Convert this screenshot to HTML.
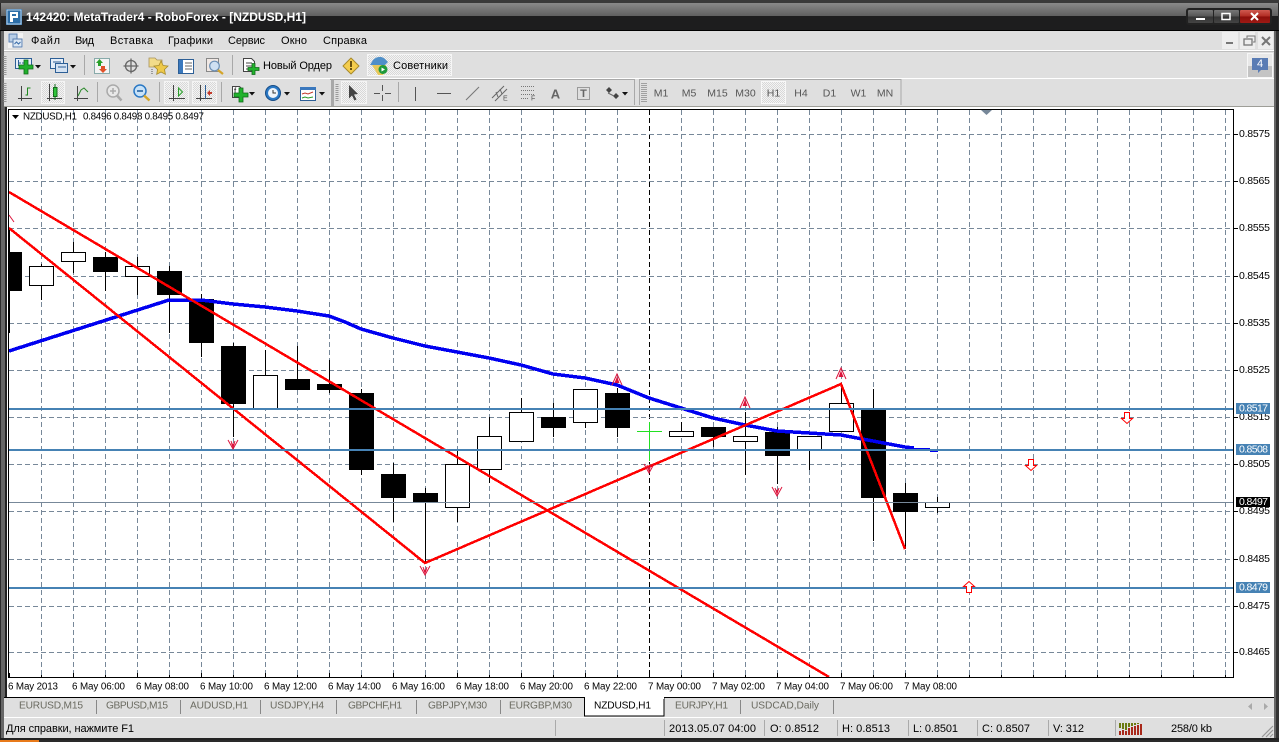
<!DOCTYPE html>
<html><head><meta charset="utf-8"><style>
html,body{margin:0;padding:0;background:#000;overflow:hidden}
svg{display:block}
text{font-family:"Liberation Sans","Noto Sans CJK SC",sans-serif;font-size:11px;dominant-baseline:central}
.g{fill:#555;font-size:10.5px}
.t{fill:#6a6a60;font-size:10.2px}
.p{font-size:10.5px;fill:#000}
.w{fill:#fff;font-size:10.5px}
.x{font-size:9.8px;fill:#000}
.c path,.c rect{shape-rendering:crispEdges}
</style></head><body>
<svg width="1279" height="742" viewBox="0 0 1279 742" xmlns="http://www.w3.org/2000/svg">
<defs>
<linearGradient id="tg" x1="0" y1="0" x2="0" y2="1"><stop offset="0" stop-color="#8a8a8a"/><stop offset="1" stop-color="#5f5f5f"/></linearGradient>
<linearGradient id="bg" x1="0" y1="0" x2="0" y2="1"><stop offset="0" stop-color="#777"/><stop offset=".5" stop-color="#555"/><stop offset=".5" stop-color="#333"/><stop offset="1" stop-color="#444"/></linearGradient>
<linearGradient id="rg" x1="0" y1="0" x2="0" y2="1"><stop offset="0" stop-color="#d05a50"/><stop offset=".5" stop-color="#b02a22"/><stop offset=".5" stop-color="#8c0e0a"/><stop offset="1" stop-color="#a01a14"/></linearGradient>
<pattern id="chk" width="2" height="2" patternUnits="userSpaceOnUse"><rect width="2" height="2" fill="#f4f4f4"/><rect width="1" height="1" fill="#d8d8d8"/><rect x="1" y="1" width="1" height="1" fill="#d8d8d8"/></pattern>
</defs>
<!-- window frame -->
<rect width="1279" height="742" fill="#2a2a2a"/>
<rect x="0" y="0" width="1279" height="3" fill="#3a3a3a"/>
<rect x="1" y="3" width="1277" height="13" fill="url(#tg)"/>
<rect x="1" y="16" width="1277" height="14" fill="#1d1d1e"/>
<rect x="0" y="30" width="1279" height="1" fill="#000"/>
<rect x="1" y="31" width="4" height="707" fill="#666"/>
<rect x="5" y="31" width="2" height="707" fill="#222"/>
<rect x="1274" y="31" width="2" height="707" fill="#666"/>
<rect x="1276" y="31" width="3" height="707" fill="#333"/>
<rect x="0" y="740" width="39" height="2" fill="#e87a1a"/>
<!-- title -->
<g>
<rect x="6" y="9" width="16" height="16" fill="#2d6ea8"/><rect x="7" y="10" width="14" height="14" fill="none" stroke="#bcd4ea"/>
<path d="M10 12h8v6h-5v4h-3zM12 14v2h4v-2z" fill="#fff" fill-rule="evenodd"/>
<text x="26" y="17" style="font-size:12px;font-weight:bold;fill:#fff" textLength="280">142420: MetaTrader4 - RoboForex - [NZDUSD,H1]</text>
</g>
<rect x="1186" y="8" width="86" height="17" rx="3" fill="#222"/>
<rect x="1188" y="10" width="25" height="13" rx="1" fill="url(#bg)"/>
<rect x="1214" y="10" width="25" height="13" rx="1" fill="url(#bg)"/>
<rect x="1240" y="10" width="30" height="13" rx="1" fill="url(#rg)"/>
<rect x="1196" y="18" width="9" height="2" fill="#fff"/>
<rect x="1222" y="13.500" width="8" height="6" fill="none" stroke="#fff" stroke-width="1.500"/>
<path d="M1251 13l7 7M1258 13l-7 7" stroke="#fff" stroke-width="2"/>
<!-- menu and toolbars -->
<rect x="7" y="31" width="1267" height="76" fill="#dfdfdf"/>
<rect x="4" y="31" width="3" height="76" fill="#dfdfdf"/>
<rect x="4" y="50" width="1270" height="1" fill="#fff"/>
<rect x="4" y="51" width="1270" height="1" fill="#bdbdbd"/>
<rect x="4" y="78" width="1270" height="1" fill="#fff"/>
<rect x="4" y="106" width="1270" height="1" fill="#9e9e98"/>
<!-- menu -->
<rect x="8" y="33" width="15" height="15" fill="#f2f2f2"/>
<rect x="9" y="34" width="8" height="8" fill="#b7cde6" stroke="#5a7fb0"/><rect x="13" y="39" width="9" height="8" fill="#dbe7f4" stroke="#5a7fb0"/>
<path d="M14.500 44l2-2 2 2 2-2" fill="none" stroke="#3a6ca8"/>
<text x="31" y="41" textLength="29">Файл</text>
<text x="75" y="41" textLength="19">Вид</text>
<text x="110" y="41" textLength="43">Вставка</text>
<text x="168" y="41" textLength="45">Графики</text>
<text x="228" y="41" textLength="37">Сервис</text>
<text x="281" y="41" textLength="26">Окно</text>
<text x="323" y="41" textLength="44">Справка</text>
<!-- mdi buttons -->
<rect x="1222" y="32" width="16" height="17" fill="#eeeeee"/><rect x="1240" y="32" width="15" height="17" fill="#eeeeee"/><rect x="1258" y="32" width="15" height="17" fill="#eeeeee"/>
<rect x="1226" y="42" width="7" height="2" fill="#777"/>
<rect x="1244" y="39" width="8" height="6" fill="none" stroke="#777" stroke-width="1.300"/><path d="M1247 38v-2h8v6h-2" fill="none" stroke="#777"/>
<path d="M1262 37l8 8M1270 37l-8 8" stroke="#777" stroke-width="2"/>
<!-- message -->
<rect x="1247.500" y="53.500" width="25" height="24" fill="#e8e8e8" stroke="#f6f6f6"/><rect x="1248" y="66" width="24" height="11" fill="#c4c4c4"/>
<path d="M1252 58h16v12h-7l-3 3v-3h-6z" fill="#5a7cb4"/>
<text x="1260" y="64" text-anchor="middle" style="font-size:11px;fill:#fff">4</text>
<!-- row 1 grips/seps -->
<path d="M5 56v20M5 83v20" stroke="#9a9a9a" stroke-width="3" stroke-dasharray="1 1"/>
<path d="M84.500 55v20M232.500 55v20M97.500 82v20M159.500 82v20M221.500 82v20M398.500 82v20" stroke="#a8a8a8"/>
<!-- new chart -->
<rect x="15.500" y="58.500" width="16" height="10" fill="#e6eef8" stroke="#2d5f96"/><path d="M18.500 60v6M22 63h6M18 63h3" stroke="#2d5f96"/>
<path d="M24 60h4v5h5v4h-5v5h-4v-5h-5v-4h5z" fill="#21b02c" stroke="#116a1a" stroke-width=".8"/>
<path d="M35 65h6l-3 3.500z" fill="#111"/>
<!-- profile -->
<rect x="50.500" y="58.500" width="13" height="10" fill="#e6eef8" stroke="#2d5f96"/><rect x="55.500" y="63.500" width="12" height="9" fill="#d4e2f2" stroke="#2d5f96"/><path d="M53 62h8M58 67h8" stroke="#2d5f96"/>
<path d="M70 65h6l-3 3.500z" fill="#111"/>
<!-- market watch -->
<rect x="94.500" y="58.500" width="15" height="15" fill="#f4f4f4" stroke="#8aa"/><path d="M96 63l3.500-4 3.500 4h-2v3h-3v-3z" fill="#2aa02a"/><path d="M103 73l-4-4h2v-3h4v3h2z" fill="#e0522a"/>
<!-- crosshair -->
<g fill="none" stroke="#666" stroke-width="1.300"><circle cx="131" cy="66" r="5.500"/><path d="M131 58.500v15M123.500 66h15"/></g>
<!-- star folder -->
<path d="M149 58h6l2 2h5v7h-13z" fill="#f2dc8a" stroke="#a8925a" stroke-width=".8"/><path d="M161 61l2.200 4.500 4.800.6-3.500 3.400.9 4.800-4.400-2.300-4.300 2.300.8-4.800-3.500-3.400 4.900-.6z" fill="#eec94a" stroke="#a58a2a" stroke-width=".8"/>
<path d="M152 69v5" stroke="#555" stroke-dasharray="1 1"/>
<!-- navigator -->
<rect x="178.500" y="59.500" width="15" height="14" fill="#fff" stroke="#2d5f96"/><rect x="179" y="60" width="4" height="13" fill="#3a78bd"/><path d="M185 63h7M185 66h7M185 69h7" stroke="#666"/>
<!-- terminal mag -->
<rect x="206.500" y="58.500" width="12" height="13" fill="#f0e8e4" stroke="#888"/><circle cx="214.500" cy="66" r="4.800" fill="#cfe0f2" stroke="#6b8fb5" stroke-width="1.200"/><path d="M218 70l5 4" stroke="#d4a52a" stroke-width="2.200"/>
<!-- new order -->
<path d="M243.500 58.500h8l3 3v10h-11z" fill="#fff" stroke="#444"/><path d="M246 63h6M246 66h6M246 69h4" stroke="#444"/>
<path d="M252 63.500h3v4h4v3h-4v4h-3v-4h-4v-3h4z" fill="#22b32d" stroke="#116a1a" stroke-width=".8"/>
<text x="263" y="66" textLength="69">Новый Ордер</text>
<!-- warning -->
<path d="M351 58l8 8-8 8-8-8z" fill="#f4cd4e" stroke="#a88a2a" stroke-linejoin="round"/><rect x="350" y="61" width="2" height="6" fill="#6a5210"/><rect x="350" y="68" width="2" height="2" fill="#6a5210"/>
<!-- advisors -->
<rect x="367" y="54" width="85" height="22" fill="url(#chk)"/><rect x="367.500" y="54.500" width="84" height="21" fill="none" stroke="#f6f6f6"/>
<path d="M370 65l3-5c4-4 9-4 12-1l3 3-3 3h-12z" fill="#4f8fc8"/><path d="M372 65h14v6l-3 4h-5z" fill="#e8c85a"/><circle cx="383" cy="69.500" r="4.500" fill="#1f9a3c"/><path d="M381.500 67.500l3.500 2-3.500 2z" fill="#fff"/>
<text x="393" y="66" textLength="55">Советники</text>
<!-- row 2 -->
<path d="M21.500 86v15M18 98.500h14" fill="none" stroke="#444"/><path d="M25.500 95h2v-7h3" fill="none" stroke="#1f8a1f"/>
<rect x="41" y="81" width="24" height="23" fill="url(#chk)"/><rect x="41.500" y="81.500" width="23" height="22" fill="none" stroke="#f4f4f4"/>
<path d="M49.500 84v17M47 98.500h15" fill="none" stroke="#444"/><path d="M55 84v16" stroke="#146c1c"/><rect x="53.500" y="87.500" width="3.500" height="9" fill="#2fc43a" stroke="#146c1c"/>
<path d="M77.500 86v15M74 98.500h14" fill="none" stroke="#444"/><path d="M78 96l3-6 3-2 4 4" fill="none" stroke="#2a8a2a"/>
<g fill="none" stroke="#aaa"><circle cx="113" cy="91" r="6" stroke-width="1.500" fill="#e8e8e8"/><path d="M110 91h6M113 88v6" stroke-width="1.500"/><path d="M117 95.500l4.500 5" stroke-width="2.500"/></g>
<circle cx="140" cy="91" r="6" fill="#c8e2f8" stroke="#2a78c4" stroke-width="1.500"/><path d="M137 91h6" stroke="#1a5a9a" stroke-width="1.500"/><path d="M144 95.500l5.500 5" stroke="#d4a52a" stroke-width="2.500"/>
<rect x="164" y="81" width="25" height="23" fill="url(#chk)"/><rect x="164.500" y="81.500" width="24" height="22" fill="none" stroke="#f4f4f4"/>
<path d="M173.500 85v16M169 98.500h16" fill="none" stroke="#444"/><path d="M178.500 88l4 4-4 4z" fill="#d8f0d8" stroke="#2a9a2a"/>
<rect x="192" y="81" width="25" height="23" fill="url(#chk)"/><rect x="192.500" y="81.500" width="24" height="22" fill="none" stroke="#f4f4f4"/>
<path d="M200.500 85v16M196 98.500h16" fill="none" stroke="#444"/><path d="M205.500 85v14" stroke="#2d5f96"/><path d="M207 93l3-3v2h2v2h-2v2z" fill="#c43a2a"/>
<path d="M232.500 86.500h7l2 2v9h-9z" fill="#fff" stroke="#444"/><text x="234" y="91" style="font-size:8px">f</text>
<path d="M239 88h4v5h5v4h-5v5h-4v-5h-5v-4h5z" fill="#22b32d" stroke="#116a1a" stroke-width=".8"/>
<path d="M249 92h6l-3 3.500z" fill="#111"/>
<circle cx="273" cy="93" r="7.500" fill="#2a78c4" stroke="#164c86"/><circle cx="273" cy="93" r="5" fill="#eef4fa"/><path d="M273 90v3h3" fill="none" stroke="#333"/>
<path d="M284 92h6l-3 3.500z" fill="#111"/>
<rect x="300.500" y="87.500" width="15" height="13" fill="#fff" stroke="#2d5f96"/><rect x="300" y="87" width="16" height="3" fill="#3a78bd"/><path d="M302 94l3-1 3 1 5-2" fill="none" stroke="#c43a2a"/><path d="M302 98l3-1 3 1 5-1" fill="none" stroke="#2a9a2a"/>
<path d="M319 92h6l-3 3.500z" fill="#111"/>
<rect x="331" y="79" width="3" height="27" fill="#a8a8a8"/>
<path d="M337 84v18" stroke="#9a9a9a" stroke-width="3" stroke-dasharray="1 1"/>
<rect x="341" y="81" width="26" height="23" fill="url(#chk)"/><rect x="341.500" y="81.500" width="25" height="22" fill="none" stroke="#f4f4f4"/>
<path d="M349 85l9 9-4 .5 2.500 5-2 1-2.500-5-3 3z" fill="#444"/>
<path d="M382.500 85v6M382.500 95v6M374 93.500h6M385 93.500h6" stroke="#555"/>
<path d="M415.500 87v14" stroke="#555"/><path d="M437 93.500h14" stroke="#555"/>
<path d="M466 100l13-13" stroke="#777" stroke-width="1.100"/>
<path d="M492 98l12-12M495 101l12-12M496 92l2 5M500 89l2 5" stroke="#666" stroke-width="1" fill="none"/><text x="503" y="99" style="font-size:7px;fill:#555">E</text>
<path d="M521 86.500h14M521 90.500h14M521 94.500h14M521 98.500h8" stroke="#777" stroke-dasharray="1 1"/><text x="531" y="99" style="font-size:7px;fill:#555">F</text>
<text x="555.500" y="94" text-anchor="middle" style="font-size:13px;fill:#666;font-weight:bold">A</text>
<rect x="577.500" y="87.500" width="12" height="12" fill="none" stroke="#555" stroke-dasharray="1 1"/><text x="583.500" y="94" text-anchor="middle" style="font-size:11px;fill:#666;font-weight:bold">T</text>
<path d="M606 90l3-3 3 3zM606 90l3 3 3-3zM613 96l3-3 3 3zM613 96l3 3 3-3z" fill="#444"/><path d="M608 93l6 3" stroke="#666"/>
<path d="M622 92h6l-3 3.500z" fill="#111"/>
<path d="M330 79.500h304.500V105M639.500 105V79.500h261.500V105" fill="none" stroke="#a8a8a8"/>
<path d="M644 83v19" stroke="#a0a0a0" stroke-width="6" stroke-dasharray="1 1"/>
<rect x="761" y="81" width="25" height="23" fill="url(#chk)"/><rect x="761.500" y="81.500" width="24" height="22" fill="none" stroke="#f8f8f8"/>
<text class="g" x="661" y="93.500" text-anchor="middle">M1</text><text class="g" x="689" y="93.500" text-anchor="middle">M5</text><text class="g" x="717.500" y="93.500" text-anchor="middle">M15</text><text class="g" x="745.500" y="93.500" text-anchor="middle">M30</text><text class="g" x="773.500" y="93.500" text-anchor="middle">H1</text><text class="g" x="801" y="93.500" text-anchor="middle">H4</text><text class="g" x="829.500" y="93.500" text-anchor="middle">D1</text><text class="g" x="858.500" y="93.500" text-anchor="middle">W1</text><text class="g" x="885" y="93.500" text-anchor="middle">MN</text>
<!-- chart -->
<rect x="7" y="107" width="1267" height="590" fill="#fff"/>
<g class="c">
<path d="M41.500 110V677M73.500 110V677M105.500 110V677M137.500 110V677M169.500 110V677M201.500 110V677M233.500 110V677M265.500 110V677M297.500 110V677M329.500 110V677M361.500 110V677M393.500 110V677M425.500 110V677M457.500 110V677M489.500 110V677M521.500 110V677M553.500 110V677M585.500 110V677M617.500 110V677M681.500 110V677M713.500 110V677M745.500 110V677M777.500 110V677M809.500 110V677M841.500 110V677M873.500 110V677M905.500 110V677M937.500 110V677M969.500 110V677M1001.500 110V677M1033.500 110V677M1065.500 110V677M1097.500 110V677M1129.500 110V677M1161.500 110V677M1193.500 110V677M1225.500 110V677" stroke="#778899" stroke-dasharray="5 3" fill="none"/>
<path d="M649.500 110V677" stroke="#000" stroke-dasharray="5 3"/>
<path d="M9 134.500H1233M9 181.500H1233M9 228.500H1233M9 276.500H1233M9 323.500H1233M9 370.500H1233M9 417.500H1233M9 464.500H1233M9 511.500H1233M9 559.500H1233M9 606.500H1233M9 652.500H1233" stroke="#778899" stroke-dasharray="5 3" fill="none"/>
<!-- wicks -->
<path stroke="#000" fill="none" d="M9.500 230V333M41.500 264V300M73.500 242V273M105.500 252V291M137.500 257V295M169.500 266V333M201.500 294V357M233.500 343V437M265.500 350V409M297.500 346V390M329.500 360V393M361.500 389V475M393.500 463V522M425.500 488V563M457.500 450V522M489.500 417V483M521.500 398V441M553.500 403V437M585.500 389V428M617.500 388V437M681.500 422V436M713.500 427V447M745.500 412V475M777.500 427V484M809.500 436V470M841.500 385V431M873.500 389V541M905.500 483V549M937.500 497V513"/>
<!-- black bodies -->
<path fill="#000" d="M9 252h13v39H9zM93 257h25v15H93zM157 271h25v24h-25zM189 299h25v44h-25zM221 346h25v58h-25zM285 379h25v11h-25zM317 384h25v6h-25zM349 393h25v77h-25zM381 474h25v24h-25zM413 493h25v10h-25zM541 417h25v11h-25zM605 393h25v35h-25zM701 427h25v10h-25zM765 432h25v24h-25zM861 409h25v89h-25zM893 493h25v19h-25z"/>
<!-- white bodies -->
<path fill="#fff" stroke="#000" d="M29.500 266.500h24v19h-24zM61.500 252.500h24v9h-24zM125.500 266.500h24v10h-24zM253.500 375.500h24v34h-24zM445.500 464.500h24v43h-24zM477.500 436.500h24v33h-24zM509.500 412.500h24v29h-24zM573.500 389.500h24v33h-24zM669.500 431.500h24v5h-24zM733.500 436.500h24v5h-24zM797.500 436.500h24v13h-24zM829.500 403.500h24v28h-24zM925.500 502.500h24v5h-24z"/>
<path d="M637 431.500h25M649.500 422v39" stroke="#22e022" fill="none"/>
<!-- MA -->
<path d="M9 351L169 300H201L233 304L265 307L297 311L329 316L345 322L361 329L393 338L425 346L457 352L489 358L521 365L553 374L585 378L617 385L649 398L681 408L713 418L745 425L777 431L809 433L841 435L873 441L905 447L914 448" fill="none" stroke="#0000f0" stroke-width="3.500"/>
<path d="M914 448.500H930" fill="none" stroke="#0000f0" stroke-width="1"/>
<!-- red -->
<path d="M9 192L829 677M9 228L425 563L841 384L905 549" fill="none" stroke="#f00" stroke-width="2.500"/>
<!-- levels -->
<path d="M9 409H1233M9 450H1233M9 588H1233" stroke="#4682b4" stroke-width="2" fill="none"/>
<path d="M930 451.500H938" stroke="#0000f0"/>
<path d="M9 502.500H1233" stroke="#778899"/>
<rect x="8" y="109" width="1226" height="1" fill="#000"/>
<rect x="8" y="109" width="1" height="569" fill="#000"/>
<rect x="1233" y="109" width="1" height="569" fill="#000"/>
<rect x="8" y="677" width="1226" height="1" fill="#000"/>
</g>
<rect x="7" y="107" width="1" height="590" fill="#fff"/>
<!-- fractals -->
<g fill="none" stroke="#dc143c" stroke-width="1">
<path d="M612 385l5-11 5 11M615 383l2-5 2 5"/><path d="M740 408l5-11 5 11M743 406l2-5 2 5"/><path d="M836 379l5-11 5 11M839 377l2-5 2 5"/>
<path d="M228 440l5 9 5-9M231 441l2 5 2-5"/><path d="M420 566l5 9 5-9M423 567l2 5 2-5"/><path d="M644 464l5 9 5-9M647 465l2 5 2-5"/><path d="M772 487l5 9 5-9M775 488l2 5 2-5"/>
<path d="M9 215l5 7"/>
</g>
<path d="M233 444l2-1-2 6-2-6zM425 570l2-1-2 5-2-5zM649 467l2-1-2 6-2-6zM777 490l2-1-2 6-2-6zM617 377l-2 6h4zM745 400l-2 6h4zM841 371l-2 6h4z" fill="#dc143c"/>
<!-- arrows -->
<g fill="#fff" stroke="#f00"><path d="M1124.500 412.500h5v6h3l-5.500 5-5.500-5h3z"/><path d="M1028.500 459.500h5v6h3l-5.500 5-5.500-5h3z"/><path d="M966.500 592.500h5v-6h3l-5.500-5-5.500 5h3z"/></g>
<path d="M981 110h11l-5.500 5z" fill="#778899"/>
<!-- info -->
<path d="M12 115h7l-3.500 4z" fill="#000"/>
<text class="x" x="23" y="117" textLength="54">NZDUSD,H1</text>
<text class="x" x="83" y="117" textLength="121">0.8496 0.8498 0.8495 0.8497</text>
<!-- scale ticks -->
<path d="M1234 134.500h4M1234 181.500h4M1234 228.500h4M1234 276.500h4M1234 323.500h4M1234 370.500h4M1234 417.500h4M1234 464.500h4M1234 511.500h4M1234 559.500h4M1234 606.500h4M1234 652.500h4" stroke="#000" style="shape-rendering:crispEdges"/>
<text class="p" x="1239" y="134" textLength="31">0.8575</text><text class="p" x="1239" y="181" textLength="31">0.8565</text><text class="p" x="1239" y="228" textLength="31">0.8555</text><text class="p" x="1239" y="276" textLength="31">0.8545</text><text class="p" x="1239" y="323" textLength="31">0.8535</text><text class="p" x="1239" y="370" textLength="31">0.8525</text><text class="p" x="1239" y="417" textLength="31">0.8515</text><text class="p" x="1239" y="464" textLength="31">0.8505</text><text class="p" x="1239" y="511" textLength="31">0.8495</text><text class="p" x="1239" y="559" textLength="31">0.8485</text><text class="p" x="1239" y="606" textLength="31">0.8475</text><text class="p" x="1239" y="652" textLength="31">0.8465</text>
<rect x="1236" y="403" width="34" height="11" fill="#4682b4"/><text class="w" x="1239" y="408.500" textLength="29">0.8517</text>
<rect x="1236" y="444" width="34" height="11" fill="#4682b4"/><text class="w" x="1239" y="449.500" textLength="29">0.8508</text>
<rect x="1236" y="497" width="34" height="10" fill="#000"/><text class="w" x="1239" y="502" textLength="29">0.8497</text>
<rect x="1236" y="582" width="34" height="11" fill="#4682b4"/><text class="w" x="1239" y="587.500" textLength="29">0.8479</text>
<!-- time axis -->
<path d="M9.500 673v4M41.500 675v2M73.500 673v4M105.500 675v2M137.500 673v4M169.500 675v2M201.500 673v4M233.500 675v2M265.500 673v4M297.500 675v2M329.500 673v4M361.500 675v2M393.500 673v4M425.500 675v2M457.500 673v4M489.500 675v2M521.500 673v4M553.500 675v2M585.500 673v4M617.500 675v2M649.500 673v4M681.500 675v2M713.500 673v4M745.500 675v2M777.500 673v4M809.500 675v2M841.500 673v4M873.500 675v2M905.500 673v4M937.500 675v2M969.500 675v2M1001.500 675v2M1033.500 675v2M1065.500 675v2M1097.500 675v2M1129.500 675v2M1161.500 675v2M1193.500 675v2M1225.500 675v2" stroke="#000" style="shape-rendering:crispEdges"/>
<text class="x" x="8" y="687" textLength="50">6 May 2013</text>
<text class="x" x="72" y="687" textLength="53">6 May 06:00</text><text class="x" x="136" y="687" textLength="53">6 May 08:00</text><text class="x" x="200" y="687" textLength="53">6 May 10:00</text><text class="x" x="264" y="687" textLength="53">6 May 12:00</text><text class="x" x="328" y="687" textLength="53">6 May 14:00</text><text class="x" x="392" y="687" textLength="53">6 May 16:00</text><text class="x" x="456" y="687" textLength="53">6 May 18:00</text><text class="x" x="520" y="687" textLength="53">6 May 20:00</text><text class="x" x="584" y="687" textLength="53">6 May 22:00</text><text class="x" x="648" y="687" textLength="53">7 May 00:00</text><text class="x" x="712" y="687" textLength="53">7 May 02:00</text><text class="x" x="776" y="687" textLength="53">7 May 04:00</text><text class="x" x="840" y="687" textLength="53">7 May 06:00</text><text class="x" x="904" y="687" textLength="53">7 May 08:00</text>
<!-- tabs -->
<rect x="4" y="697" width="1270" height="1" fill="#000"/>
<rect x="4" y="698" width="1270" height="19" fill="#dfdfdf"/>
<rect x="4" y="717" width="1270" height="1" fill="#fff"/>
<path d="M96.500 700v14M180.500 700v14M260.500 700v14M336.500 700v14M416.500 700v14M500.500 700v14M740.500 700v14M833.500 700v14" stroke="#888"/>
<path d="M584.500 697.500v18.500h79.500V697.500" fill="#fff" stroke="#000"/><rect x="585" y="697" width="79" height="2" fill="#fff"/>
<text class="t" x="19" y="706" textLength="64">EURUSD,M15</text><text class="t" x="106" y="706" textLength="62">GBPUSD,M15</text><text class="t" x="190" y="706" textLength="58">AUDUSD,H1</text><text class="t" x="270" y="706" textLength="54">USDJPY,H4</text><text class="t" x="348" y="706" textLength="54">GBPCHF,H1</text><text class="t" x="428" y="706" textLength="59">GBPJPY,M30</text><text class="t" x="509" y="706" textLength="63">EURGBP,M30</text>
<text x="594" y="706" textLength="57" style="font-size:10.200px">NZDUSD,H1</text>
<text class="t" x="675" y="706" textLength="53">EURJPY,H1</text><text class="t" x="751" y="706" textLength="68">USDCAD,Daily</text>
<path d="M1252 703v7l-4-3.500zM1264 703v7l4-3.500z" fill="#aaa"/>
<!-- status -->
<rect x="4" y="718" width="1270" height="20" fill="#dfdfdf"/>
<rect x="0" y="738" width="1279" height="2" fill="#222"/>
<path d="M555.500 720v16M664.500 720v16M764.500 720v16M837.500 720v16M908.500 720v16M977.500 720v16M1048.500 720v16M1115.500 720v16" stroke="#aaa"/>
<text x="6" y="729" textLength="128">Для справки, нажмите F1</text>
<text x="669" y="729" textLength="87">2013.05.07 04:00</text><text x="770" y="729" textLength="49">O: 0.8512</text><text x="842" y="729" textLength="48">H: 0.8513</text><text x="913" y="729" textLength="45">L: 0.8501</text><text x="982" y="729" textLength="48">C: 0.8507</text><text x="1053" y="729" textLength="31">V: 312</text><text x="1171" y="729" textLength="41">258/0 kb</text>
<g style="shape-rendering:crispEdges">
<path d="M1119 723h2v5h-2zM1122 723h2v6h-2zM1125 723h2v7h-2zM1128 723h2v4h-2zM1131 723h2v3h-2zM1134 723h2v2h-2zM1137 723h2v1h-2z" fill="#6b7a10"/>
<path d="M1119 731h2v4h-2zM1122 730h2v5h-2zM1125 731h2v4h-2zM1128 728h2v7h-2zM1131 727h2v8h-2zM1134 726h2v9h-2zM1137 725h2v10h-2zM1140 724h2v11h-2z" fill="#a8281a"/>
</g>
<path d="M1262 737l11-11M1266 737l7-7M1270 737l3-3" stroke="#999" stroke-width="1.200"/>
</svg>
</body></html>
